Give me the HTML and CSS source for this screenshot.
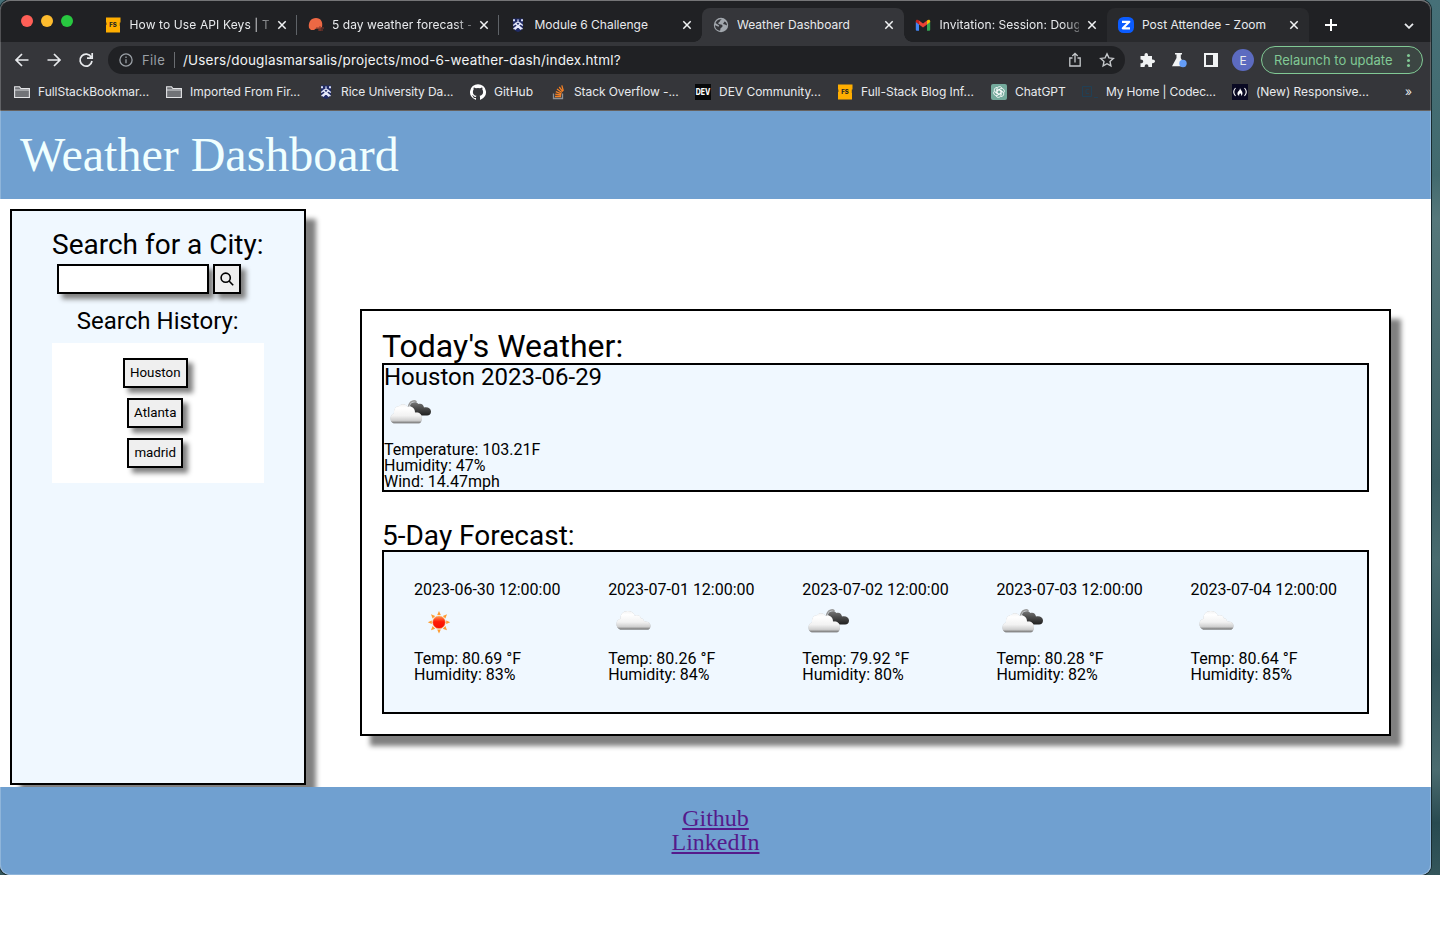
FILE: index.html
```html
<!DOCTYPE html>
<html lang="en">
<head>
<meta charset="utf-8">
<title>Weather Dashboard</title>
<link rel="stylesheet" href="styles.css">
</head>
<body>
<svg class="defs" width="0" height="0" aria-hidden="true">
  <defs>
    <linearGradient id="gWhite" x1="0" y1="0" x2="0" y2="1"><stop offset="0" stop-color="#f4f4f4"/><stop offset=".2" stop-color="#fff"/><stop offset=".6" stop-color="#f2f2f2"/><stop offset=".85" stop-color="#cfcfcf"/><stop offset="1" stop-color="#6f6f6f"/></linearGradient>
    <linearGradient id="gDark" x1="0" y1="0" x2="0" y2="1"><stop offset="0" stop-color="#777"/><stop offset=".4" stop-color="#505050"/><stop offset="1" stop-color="#202020"/></linearGradient>
    <linearGradient id="gSun" x1="0" y1="0" x2="0" y2="1"><stop offset="0" stop-color="#ff9a50"/><stop offset=".45" stop-color="#ff1c08"/><stop offset="1" stop-color="#f51000"/></linearGradient>
    <filter id="soft" x="-20%" y="-20%" width="140%" height="150%"><feDropShadow dx="0" dy="0" stdDeviation=".6" flood-color="#444" flood-opacity=".5"/></filter>
    <symbol id="cloud" viewBox="0 0 50 50"><path filter="url(#soft)" fill="url(#gWhite)" d="M12 31.500C9.500 30.500 8.500 28.500 8.500 26c0-2.800 1.500-4.800 4-5.300C12 16.500 15.500 13 19.500 13c4 0 6.500 2 7.300 4.800 3-1.200 5.500 0 6.200 2.700l2 .3c.5 2 1.500 3 3.500 3 2.500 0 4 1.700 4 4 0 2-1 3.700-2.500 3.700z"/></symbol>
    <symbol id="broken" viewBox="0 0 50 50"><path fill="none" stroke="#999" stroke-width="1.500" d="M24.500 18c1-7 7-7 8-4.500"/><path fill="url(#gDark)" d="M26 17c0-4 6-5 8.500-2 3-1 5 1 5.500 3.500 4-.8 7 1 7 4 0 2.500-1.500 4-4 4H32z"/><path filter="url(#soft)" fill="url(#gWhite)" d="M9.500 34.300C7.500 33.500 6.500 32 6.500 29.500c0-2.800 1.500-4.500 3.500-5C9.500 20 12 17 15.500 17c1.500-2.500 6.500-2.500 8 1 4-1.500 7.500 1.500 7.500 5.500 4-.5 7 1.500 7 5.500 0 3-1.500 5.300-3 5.300z"/></symbol>
    <symbol id="sun" viewBox="0 .5 50 50"><path fill="#ff9c30" d="M25 13.500l1.800 4h-3.600zM25 36l-1.800-4h3.600zM13.800 24.800l4-1.800v3.600zM36.200 24.800l-4-1.800v3.600zM17 16.800l4.200 1.600-2.600 2.600zM33 16.800l-4.200 1.600 2.600 2.600zM17 32.800l4.200-1.600-2.600-2.600zM33 32.800l-4.200-1.600 2.600-2.600z"/><circle cx="25" cy="24.800" r="6.300" fill="url(#gSun)" stroke="#ffb060" stroke-width=".5"/></symbol>
    <symbol id="fs" viewBox="0 0 16 16"><path fill="#ffae00" d="M1 .5h14.500V5.500h-.7v3.500h.2v6.500H1V8h.4V5.500H1z"/><text x="8" y="10.300" font-size="6" font-weight="800" text-anchor="middle" fill="#222">FS</text></symbol>
    <symbol id="shield" viewBox="0 0 16 16"><path fill="#202b66" d="M3 1.500h10v8c0 3-2 4.500-5 5.500-3-1-5-2.500-5-5.500z"/><path fill="none" stroke="#e6e9fa" stroke-width="1.400" d="M3.200 8.500L8 4.800l4.800 3.700M5 6l6 6.500M11 6l-6 6.500M3.500 12L8 8.500l4.500 3.500"/><path fill="#d5dbf5" d="M3 2.300h2v2H3zM11 2.300h2v2h-2zM7.200 2.500h1.600v1.200H7.200z"/></symbol>
    <symbol id="folder" viewBox="0 0 16 16"><path fill="#717377" stroke="#e3e4e6" stroke-width="1.100" d="M.6 2.800h5l1.300 1.700h8.500v9H.6z"/><path stroke="#e3e4e6" stroke-width=".9" d="M1 6h14.500"/></symbol>
    <symbol id="x" viewBox="0 0 10 10"><path stroke="#f1f3f4" stroke-width="1.500" d="M1.300 1.300l7.400 7.400M8.700 1.300L1.300 8.700"/></symbol>
  </defs>
</svg>
<div class="desktop">
  <div class="window">
    <div class="tabstrip">
      <div class="lights"><i class="red"></i><i class="yellow"></i><i class="green"></i></div>
      <div class="tab"><svg class="fav"><use href="#fs"/></svg><span class="title t1 fade">How to Use API Keys | Th</span><svg class="x"><use href="#x"/></svg></div>
      <div class="tab sep"><svg class="fav" viewBox="0 0 16 16"><path fill="#ed6844" d="M1 11C0 5 3 1 8 1c5 0 7 4 6 9l-2 1.500H8L6 13H3z"/><path fill="none" stroke="#8d392a" d="M8 11h8M10 13h5M12 9v5"/></svg><span class="title t2 fade">5 day weather forecast -</span><svg class="x"><use href="#x"/></svg></div>
      <div class="tab sep"><svg class="fav"><use href="#shield"/></svg><span class="title">Module 6 Challenge</span><svg class="x"><use href="#x"/></svg></div>
      <div class="tab active"><svg class="fav" viewBox="0 0 16 16"><circle cx="8" cy="8" r="7.200" fill="#a2a7ad"/><path fill="#35363a" d="M9 2.300C7 2.600 7.500 4.500 6 5.200 5 5.700 5 7 6.500 7.200c2 .2 3.300.3 3 2-.2 1.300-1.500 1-2 2.300-.3.800 0 1.500-.5 2.200C3.800 13.500 2 11 2 8.300L5 9.500c1 .4 1.500-.5.8-1.200L2.500 6C3.500 3.500 6 1.800 9 2.300zM11.500 4.500c1.500.5 2.500 2 2.500 4L12 7.500 10 7z"/></svg><span class="title">Weather Dashboard</span><svg class="x"><use href="#x"/></svg></div>
      <div class="tab"><svg class="fav" viewBox="0 0 16 16"><path fill="#4285f4" d="M.8 4.500L4 7v6.800H1.800a1 1 0 0 1-1-1z"/><path fill="#34a853" d="M15.200 4.500L12 7v6.800h2.200a1 1 0 0 0 1-1z"/><path fill="#ea4335" d="M4 3.500l4 3 4-3V7.500l-4 3-4-3z"/><path fill="#c5221f" d="M.8 4.500C.8 2.500 2.500 2.200 4 3.500v4L.8 5z"/><path fill="#fbbc04" d="M15.200 4.500c0-2-1.700-2.300-3.200-1v4L15.200 5z"/></svg><span class="title t5 fade">Invitation: Session: Doug</span><svg class="x"><use href="#x"/></svg></div>
      <div class="tab hover"><svg class="fav" viewBox="0 0 16 16"><rect width="16" height="16" rx="5.500" fill="#0b5cff"/><path fill="none" stroke="#fff" stroke-width="2.200" stroke-linejoin="round" d="M4 4.800h7.300L4.800 11.300H12"/></svg><span class="title">Post Attendee - Zoom</span><svg class="x"><use href="#x"/></svg></div>
      <svg class="plus" viewBox="0 0 12 12"><path stroke="#fff" stroke-width="2" d="M6 0v12M0 6h12"/></svg>
      <svg class="chev" viewBox="0 0 10 6"><path fill="none" stroke="#e8eaed" stroke-width="1.800" d="M1 .8l4 4 4-4"/></svg>
    </div>
    <div class="toolbar">
      <svg class="nav" viewBox="0 0 16 16"><path d="M14.500 8H2M8 2L2 8l6 6"/></svg>
      <svg class="nav" viewBox="0 0 16 16"><path d="M1.500 8H14M8 2l6 6-6 6"/></svg>
      <svg class="nav" viewBox="0 0 16 16"><path d="M13.200 5A6 6 0 1 0 14 9M14.200 1v5.200H9"/></svg>
      <div class="omnibox">
        <svg class="info" viewBox="0 0 14 14"><circle cx="7" cy="7" r="6.100"/><path d="M7 6.200v4M7 3.600v1.300"/></svg>
        <span class="file">File</span><i class="bar"></i><span class="url">/Users/douglasmarsalis/projects/mod-6-weather-dash/index.html?</span>
        <svg class="share" viewBox="0 0 14 16"><path d="M4.500 6H1.800v8h10.400V6H9.500M7 10.500V1.500M4.300 4L7 1.300 9.700 4"/></svg>
        <svg class="star" viewBox="0 0 16 16"><path d="M8 1.800l1.900 4.100 4.400.5-3.300 3 .9 4.500L8 11.700l-3.900 2.200.9-4.500-3.300-3 4.400-.5z"/></svg>
      </div>
      <svg class="ext" viewBox="0 0 16 16"><path fill="#f1f3f4" d="M1.500 4h4C5 0 9.500 0 9 4h4v3.500c4-.4 4 4 0 3.700V15H9.400c.3-3.600-4-3.600-3.800 0H1.500v-3.700c3.600.3 3.600-4 0-3.800z"/></svg>
      <svg class="flask" viewBox="0 0 16 16"><path fill="#f1f3f4" d="M4 1h7v1.500H9.800V6l4.500 8.200H1L5.500 6V2.500H4z"/><circle cx="12" cy="11.500" r="3.700" fill="#649df7"/></svg>
      <svg class="panel" viewBox="0 0 14 14"><path fill="#f1f3f4" d="M0 0h14v14H0zM2 2v10h7V2z" fill-rule="evenodd"/></svg>
      <span class="avatar">E</span>
      <div class="relaunch"><span>Relaunch to update</span><i></i></div>
    </div>
    <div class="bookmarks">
      <div class="bm w152"><svg><use href="#folder"/></svg><span>FullStackBookmar...</span></div>
      <div class="bm w152"><svg><use href="#folder"/></svg><span>Imported From Fir...</span></div>
      <div class="bm w152 near"><svg><use href="#shield"/></svg><span>Rice University Da...</span></div>
      <div class="bm w81"><svg viewBox="0 0 16 16"><path fill="#fff" d="M8 .2a8 8 0 0 0-2.500 15.600c.4 0 .5-.2.500-.4v-1.500c-2.200.5-2.700-1-2.700-1-.4-.9-.9-1.100-.9-1.100-.7-.5.1-.5.1-.5.8.1 1.200.8 1.200.8.700 1.200 1.900.9 2.300.7.100-.5.300-.9.500-1.100-1.800-.2-3.600-.9-3.600-4 0-.9.300-1.600.8-2.100-.1-.2-.4-1 .1-2.100 0 0 .7-.2 2.200.8a8 8 0 0 1 4 0c1.500-1 2.200-.8 2.200-.8.500 1.100.2 1.900.1 2.100.5.500.8 1.200.8 2.100 0 3.100-1.900 3.800-3.600 4 .3.200.5.700.5 1.500v2.200c0 .2.200.5.500.4A8 8 0 0 0 8 .2z"/></svg><span>GitHub</span></div>
      <div class="bm w144 near"><svg viewBox="0 0 16 16"><path fill="none" stroke="#8d9195" stroke-width="1.300" d="M2.500 9.500v5h9v-5"/><path stroke="#f48024" stroke-width="1.300" d="M4 12.500h6M4.200 10.200l6 .8M4.800 7.600l5.600 2.200M6 5l4.800 3.500M8.200 3l3.600 4.600M10.800 1.300l1.500 5.500"/></svg><span>Stack Overflow -...</span></div>
      <div class="bm w142"><svg viewBox="0 0 16 16"><path fill="#08090a" d="M0 0h16v16H0z"/><text x="8" y="11" text-anchor="middle" textLength="14.500" lengthAdjust="spacingAndGlyphs" font-size="8.500" font-weight="800" fill="#fff">DEV</text></svg><span>DEV Community...</span></div>
      <div class="bm w154"><svg><use href="#fs"/></svg><span>Full-Stack Blog Inf...</span></div>
      <div class="bm w91"><svg viewBox="0 0 16 16"><rect width="16" height="16" rx="2" fill="#74aa9c"/><g fill="none" stroke="#fff" stroke-width=".8"><path id="petal" d="M6 9.500V5a2.600 2.600 0 0 1 5-.8M6 6.800l3.700-2.100"/><use href="#petal" transform="rotate(60 8 8)"/><use href="#petal" transform="rotate(120 8 8)"/><use href="#petal" transform="rotate(180 8 8)"/><use href="#petal" transform="rotate(240 8 8)"/><use href="#petal" transform="rotate(300 8 8)"/></g></svg><span>ChatGPT</span></div>
      <div class="bm w150 tight"><svg viewBox="0 0 16 16"><path fill="none" stroke="#204056" d="M.5 2.500h9v10h-9zM12 13.500h4"/><path fill="none" stroke="#204056" d="M7 5.500H4v4h3"/></svg><span>My Home | Codec...</span></div>
      <div class="bm w173"><svg viewBox="0 0 16 16"><path fill="#0a0a23" d="M0 0h16v16H0z"/><path fill="none" stroke="#fff" stroke-width="1.100" d="M3.500 4C1.300 6.500 1.300 9.500 3.500 12M12.500 4c2.200 2.500 2.200 5.500 0 8"/><path fill="#fff" d="M8 4c.3 2 2.500 3 2.500 5.200 0 1.200-.7 2.300-1.600 2.600.6-1 .2-2-.7-2.500-.6.900-1.500 1.400-1 2.500C5 11.200 5 8.700 6.500 7.300 7.500 6.300 8 5.500 8 4z"/></svg><span>(New) Responsive...</span></div>
      <span class="more">»</span>
    </div>
    <header class="page-header">Weather Dashboard</header>
    <div class="page-body">
      <aside class="sidebar">
        <h2>Search for a City:</h2>
        <div class="search"><input type="text" aria-label="City"><button class="go" aria-label="Search"><svg viewBox="0 0 14 14"><circle cx="5.700" cy="5.700" r="4.600"/><path d="M9 9l4.200 4.200"/></svg></button></div>
        <h3>Search History:</h3>
        <div class="history"><button>Houston</button><button>Atlanta</button><button>madrid</button></div>
      </aside>
      <main class="main">
        <h1>Today's Weather:</h1>
        <section class="today"><h3>Houston 2023-06-29</h3><svg class="wx"><use href="#broken"/></svg><p>Temperature: 103.21F</p><p>Humidity: 47%</p><p>Wind: 14.47mph</p></section>
        <h2>5-Day Forecast:</h2>
        <section class="forecast">
          <div><p>2023-06-30 12:00:00</p><svg class="wx"><use href="#sun"/></svg><p>Temp: 80.69 °F</p><p>Humidity: 83%</p></div>
          <div><p>2023-07-01 12:00:00</p><svg class="wx"><use href="#cloud"/></svg><p>Temp: 80.26 °F</p><p>Humidity: 84%</p></div>
          <div><p>2023-07-02 12:00:00</p><svg class="wx"><use href="#broken"/></svg><p>Temp: 79.92 °F</p><p>Humidity: 80%</p></div>
          <div><p>2023-07-03 12:00:00</p><svg class="wx"><use href="#broken"/></svg><p>Temp: 80.28 °F</p><p>Humidity: 82%</p></div>
          <div><p>2023-07-04 12:00:00</p><svg class="wx"><use href="#cloud"/></svg><p>Temp: 80.64 °F</p><p>Humidity: 85%</p></div>
        </section>
      </main>
    </div>
    <footer class="footer"><a href="#">Github</a><a href="#">LinkedIn</a></footer>
  </div>
</div>
</body>
</html>
```
FILE: styles.css
```css
* { box-sizing: border-box; }
body { margin: 0; background: #fff; overflow: hidden; }
h1, h2, h3, p { margin: 0; font-weight: 400; }
svg { display: block; flex: none; }
.defs { position: absolute; }
.desktop { width: 1440px; height: 875px; background: linear-gradient(180deg, #467078 0, #426a6e 20%, #56787b 25%, #3b5d62 55%, #496b6f 64%, #33545a 76%, #4b6c70 88%, #284a50 94%, #34565b 100%); }
.window { position: relative; display: flex; flex-direction: column; width: 1431px; height: 875px; overflow: hidden; border-radius: 10px; background: #fff; box-shadow: 0 0 0 1px #172b30; }
.window::after { content: ""; position: absolute; inset: 0; border: 1px solid rgba(255,255,255,.22); border-top-color: rgba(255,255,255,.38); border-radius: 10px; pointer-events: none; }

/* Browser frame */
.tabstrip, .toolbar, .bookmarks { font-family: Inter, "Liberation Sans", sans-serif; color: #e8eaed; flex: none; }
.defs text, .bm text { font-family: Inter, sans-serif; }
.tabstrip { display: flex; align-items: flex-start; height: 42px; padding-top: 8px; background: #202124; }
.lights { display: flex; gap: 8px; width: 94px; padding: 7px 0 0 21px; flex: none; }
.lights i { width: 12px; height: 12px; border-radius: 50%; }
.red { background: #ff5f57; }
.yellow { background: #febc2e; }
.green { background: #28c840; }
.tab { position: relative; display: flex; align-items: center; width: 202.500px; height: 34px; padding: 0 10px 0 11px; flex: none; border-radius: 8px 8px 0 0; }
.tab.sep::before { content: ""; position: absolute; left: -.6px; top: 7px; width: 1px; height: 20px; background: #5f6368; }
.tab.active { background: #35363a; }
.tab.active::before, .tab.active::after { content: ""; position: absolute; bottom: 0; width: 8px; height: 8px; }
.tab.active::before { left: -8px; background: radial-gradient(circle at 0 0, #202124 7.500px, #35363a 8px); }
.tab.active::after { right: -8px; background: radial-gradient(circle at 100% 0, #202124 7.500px, #35363a 8px); }
.tab.hover { background: #292a2d; }
.fav { width: 16px; height: 16px; margin-right: 8.500px; }
.title { width: 139px; overflow: hidden; white-space: nowrap; font-size: 12px; line-height: 18px; }
.t1 { letter-spacing: .12px; }
.t2 { letter-spacing: .05px; }
.t5 { letter-spacing: .05px; }
.fade { -webkit-mask-image: linear-gradient(90deg, #000 122px, transparent 150px); mask-image: linear-gradient(90deg, #000 122px, transparent 150px); }
.x { width: 10px; height: 10px; margin-left: 8px; }
.plus { width: 12px; height: 12px; margin: 11px 0 0 16px; }
.chev { width: 10px; height: 6px; margin: 14.500px 0 0 67px; }
.toolbar { display: flex; align-items: center; height: 36px; padding-left: 14px; background: #35363a; }
.nav { width: 16px; height: 16px; margin-right: 16px; fill: none; stroke: #e8eaed; stroke-width: 1.700; }
.omnibox { display: flex; align-items: center; width: 1017px; height: 28px; margin-left: -2px; padding: 0 10px 0 11px; border-radius: 14px; background: #202124; font-size: 13px; flex: none; }
.info { width: 14px; height: 14px; fill: none; stroke: #9aa0a6; stroke-width: 1.300; }
.file { width: 32px; margin-left: 9px; color: #9aa0a6; letter-spacing: .4px; }
.bar { width: 1px; height: 16px; background: #6a6d71; margin-right: 8px; }
.url { color: #f1f3f4; white-space: nowrap; font-size: 13.500px; letter-spacing: .18px; }
.share { width: 14px; height: 16px; margin-left: auto; margin-right: 17px; fill: none; stroke: #c5c8cb; stroke-width: 1.300; }
.star { width: 16px; height: 16px; fill: none; stroke: #c5c8cb; stroke-width: 1.400; }
.ext { width: 16px; height: 16px; margin-left: 14px; }
.flask { width: 16px; height: 16px; margin-left: 16px; }
.panel { width: 14px; height: 14px; margin-left: 17px; }
.avatar { display: grid; place-items: center; width: 22px; height: 22px; margin-left: 14px; border-radius: 50%; background: #5c6bc0; font-size: 12px; }
.relaunch { display: flex; align-items: center; width: 162px; height: 28px; margin-left: 7px; padding-left: 12px; border: 1px solid #81c995; border-radius: 14px; background: #3c4643; color: #81c995; font-size: 13px; }
.relaunch span { width: 132px; white-space: nowrap; }
.relaunch i { width: 3px; height: 3px; border-radius: 50%; margin-left: 1px; background: #81c995; box-shadow: 0 -5px #81c995, 0 5px #81c995; }
.bookmarks { display: flex; align-items: center; height: 33px; padding: 0 0 5px 14px; background: #35363a; border-bottom: 1px solid #66625f; font-size: 12px; }
.bm { display: flex; align-items: center; gap: 8px; white-space: nowrap; flex: none; letter-spacing: -.03px; }
.bm svg { width: 16px; height: 16px; }
.bm.near { gap: 7px; letter-spacing: -.08px; }
.bm.tight { letter-spacing: -.18px; }
.w152 { width: 152px; } .w81 { width: 81px; } .w144 { width: 144px; } .w142 { width: 142px; } .w154 { width: 154px; } .w91 { width: 91px; } .w150 { width: 150px; } .w173 { width: 173px; }

/* Weather page */
.page-header { flex: none; height: 88px; padding: 20px; background: #70a0d0; color: azure; font: 48px/48px "Liberation Serif", serif; }
.page-body { display: flex; align-items: flex-start; height: 588px; overflow: hidden; flex: none; font-family: Roboto, sans-serif; color: #000; }
.sidebar { width: 295.500px; height: 576px; margin: 10px 0 0 10px; padding: 20px 40px; border: 2px solid #000; background: aliceblue; box-shadow: 10px 10px 5px gray; text-align: center; flex: none; }
.sidebar h2 { font-size: 28px; line-height: 28px; white-space: nowrap; }
.search { display: flex; gap: 4px; margin: 5px 0 0 5px; }
.search input { width: 152.400px; height: 30px; padding: 0; border: 2px solid #000; background: #fff; box-shadow: 5px 5px 5px gray; }
.sidebar button { height: 30px; padding: 0 5px 1px; border: 2px solid #000; background: #efefef; box-shadow: 5px 5px 5px gray; color: #000; font: 13.333px Roboto, sans-serif; }
.sidebar .go { width: 28px; }
.go svg { width: 14px; height: 14px; fill: none; stroke: #000; stroke-width: 1.600; }
.sidebar h3 { margin-top: 15px; font-size: 24px; line-height: 24px; }
.history { display: flex; flex-direction: column; align-items: center; gap: 10px; height: 140px; margin-top: 10px; padding: 15px 5px 0 0; background: #fff; }
.main { width: 1031px; height: 427px; margin: 110px 0 0 54.500px; padding: 20px; border: 2px solid #000; background: #fff; box-shadow: 10px 10px 5px gray; flex: none; }
.main h1 { height: 32px; font-size: 32px; line-height: 30px; }
.main h2 { margin-top: 30px; font-size: 28px; line-height: 28px; }
.today { height: 128.500px; border: 2px solid #000; background: aliceblue; }
.today h3 { font-size: 24px; line-height: 24px; }
.main p { font-size: 16px; line-height: 16px; }
.wx { width: 50px; height: 50px; margin-bottom: 3px; }
.forecast { display: flex; justify-content: space-between; height: 164.500px; padding: 30px; border: 2px solid #000; background: aliceblue; }
.footer { display: flex; flex-direction: column; align-items: center; height: 88px; padding-top: 19px; background: #70a0d0; font: 24px/24px "Liberation Serif", serif; flex: none; }
.footer a { color: #551a8b; text-decoration: underline; }
```
